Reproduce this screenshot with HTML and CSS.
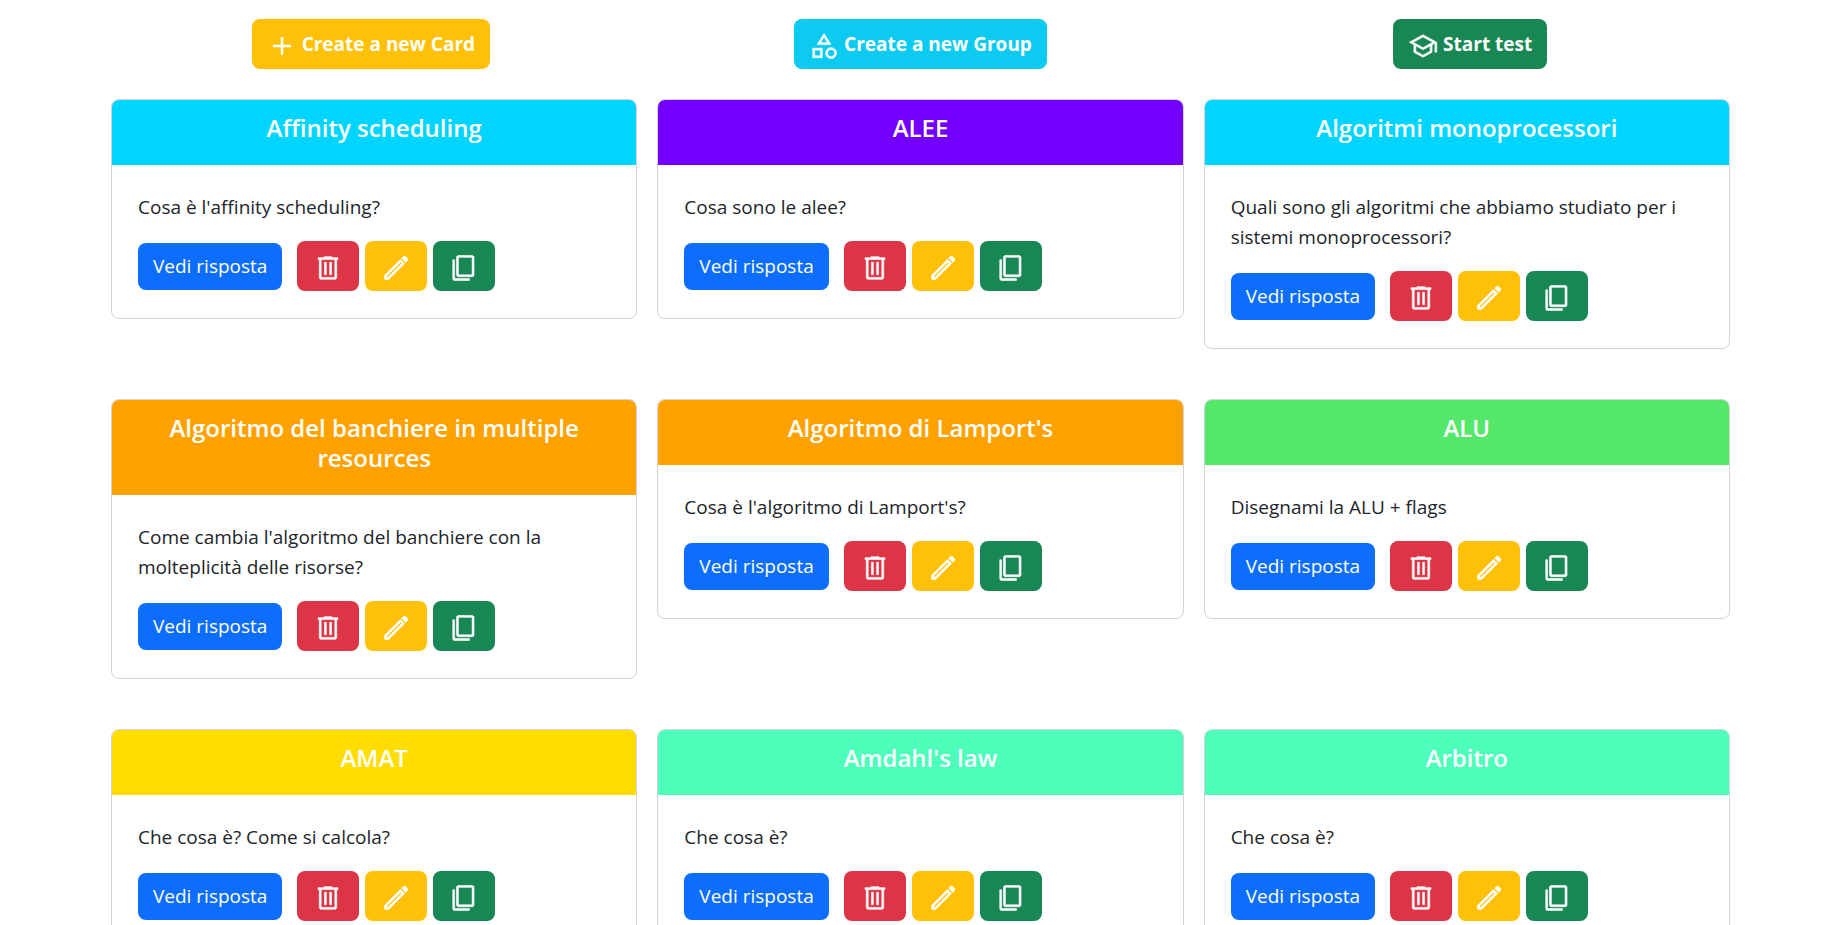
FILE: index.html
```html
<!DOCTYPE html>
<html lang="it">
<head>
<meta charset="utf-8">
<meta name="viewport" content="width=device-width, initial-scale=1">
<title>Flashcards</title>
<link rel="stylesheet" href="styles.css">
</head>
<body>
<svg class="sprite" aria-hidden="true">
  <symbol id="i-add" viewBox="0 -960 960 960"><path d="M450-200v-250H200v-60h250v-250h60v250h250v60H510v250h-60z"/></symbol>
  <symbol id="i-category" viewBox="0 -960 960 960"><path d="m261-526 220-354 220 354H261zM706-80q-74 0-124-50t-50-124q0-74 50-124t124-50q74 0 124 50t50 124q0 74-50 124T706-80zm-586-25v-304h304v304H120zm586.085-35Q754-140 787-173.085q33-33.084 33-81Q820-302 786.916-335q-33.085-33-81.001-33Q658-368 625-334.916q-33 33.085-33 81.001Q592-206 625.084-173q33.085 33 81.001 33zM180-165h184v-184H180v184zm189-421h224L481-767 369-586z"/></symbol>
  <symbol id="i-school" viewBox="0 -960 960 960"><path d="M479-120 189-279v-240L40-600l439-240 441 240v317h-60v-282l-91 46v240L479-120zm0-308 315-172-315-169-313 169 313 172zm0 240 230-127v-168L479-360 249-485v170l230 127z"/></symbol>
  <symbol id="i-delete" viewBox="0 -960 960 960"><path d="M261-120q-24.75 0-42.375-17.625T201-180v-570h-41v-60h188v-30h264v30h188v60h-41v570q0 24-18 42t-42 18H261zm438-630H261v570h438v-570zM367-266h60v-399h-60v399zm166 0h60v-399h-60v399z"/></symbol>
  <symbol id="i-edit" viewBox="0 -960 960 960"><path d="M180-180h44l443-443-44-44-443 443v44zm614-486L666-794l42-42q17-17 42-17t42 17l44 44q17 17 17 42t-17 42l-42 42zm-42 42L248-120H120v-128l504-504 128 128zm-107-21l-22-22 44 44-22-22z"/></symbol>
  <symbol id="i-copy" viewBox="0 -960 960 960"><path d="M180-81q-24 0-42-18t-18-42v-603h60v603h474v60H180zm120-120q-24 0-42-18t-18-42v-560q0-24 18-42t42-18h440q24 0 42 18t18 42v560q0 24-18 42t-42 18H300zm0-60h440v-560H300v560z"/></symbol>
</svg>

<header class="toolbar">
  <button type="button" class="btn btn-top yellow"><svg class="icon"><use href="#i-add"/></svg>Create a new Card</button>
  <button type="button" class="btn btn-top info"><svg class="icon"><use href="#i-category"/></svg>Create a new Group</button>
  <button type="button" class="btn btn-top green"><svg class="icon"><use href="#i-school"/></svg>Start test</button>
</header>

<main class="cards" id="cards"></main>

<template id="card-template">
  <article class="card">
    <h2 class="card-title"></h2>
    <div class="card-body">
      <p class="question"></p>
      <div class="actions">
        <button type="button" class="btn answer">Vedi risposta</button>
        <button type="button" class="btn tool red" aria-label="Elimina"><svg class="icon"><use href="#i-delete"/></svg></button>
        <button type="button" class="btn tool yellow" aria-label="Modifica"><svg class="icon heavy"><use href="#i-edit"/></svg></button>
        <button type="button" class="btn tool green" aria-label="Copia"><svg class="icon"><use href="#i-copy"/></svg></button>
      </div>
    </div>
  </article>
</template>
<script src="cards.js"></script>
</body>
</html>
```
FILE: styles.css
```css
* { box-sizing: border-box; }

body {
  margin: 0;
  background: #fff;
  color: #212529;
  font-family: "Segoe UI", "Open Sans", "Noto Sans", sans-serif;
  font-size: 19px;
  line-height: 30px;
}

.sprite { display: none; }

.icon {
  width: 30px;
  height: 30px;
  flex: none;
  fill: currentColor;
  stroke: currentColor;
  stroke-width: 20;
}

.heavy { stroke-width: 30; }

.btn {
  display: inline-flex;
  align-items: center;
  border: 0;
  border-radius: 8px;
  color: #fff;
  font: inherit;
  white-space: nowrap;
  cursor: pointer;
}

.yellow { background: #ffc107; }
.info { background: #0dcaf0; }
.green { background: #198754; }
.red { background: #dc3545; }

.toolbar {
  display: grid;
  grid-template-columns: repeat(3, 1fr);
  justify-items: center;
  padding: 19px 93px 30px 96px;
}

.btn-top {
  height: 50px;
  gap: 5px;
  padding: 0 15px;
  font-weight: 700;
}

.btn-top .icon { margin-top: 4px; }

.cards {
  display: grid;
  grid-template-columns: repeat(3, 1fr);
  align-items: start;
  gap: 50px 20px;
  padding: 0 108px 50px 111px;
}

.card {
  overflow: hidden;
  border: 1px solid #d3d3d4;
  border-radius: 8px;
}

.card-title {
  margin: 0;
  padding: 13px 20px 22px;
  color: #fff;
  font-size: 24px;
  font-weight: 600;
  line-height: 30px;
  text-align: center;
}

.card.cyan .card-title { background: #00d5ff; }
.card.violet .card-title { background: #7300ff; }
.card.orange .card-title { background: #ffa200; }
.card.lime .card-title { background: #54e86b; }
.card.gold .card-title { background: #ffdd00; }
.card.mint .card-title { background: #4dffbb; }

.card-body { padding: 27px 26px; }

.question { margin: 0 0 19px; }

.actions {
  display: flex;
  align-items: center;
  gap: 6px;
}

.answer {
  height: 47px;
  margin-right: 9px;
  padding: 0 15px;
  background: #0d6efd;
}

.tool {
  height: 50px;
  padding: 4px 16px 0;
}
```
FILE: cards.js
```js
const cards = [
  ["cyan", "Affinity scheduling", "Cosa è l'affinity scheduling?"],
  ["violet", "ALEE", "Cosa sono le alee?"],
  ["cyan", "Algoritmi monoprocessori", "Quali sono gli algoritmi che abbiamo studiato per i sistemi monoprocessori?"],
  ["orange", "Algoritmo del banchiere in multiple resources", "Come cambia l'algoritmo del banchiere con la molteplicità delle risorse?"],
  ["orange", "Algoritmo di Lamport's", "Cosa è l'algoritmo di Lamport's?"],
  ["lime", "ALU", "Disegnami la ALU + flags"],
  ["gold", "AMAT", "Che cosa è? Come si calcola?"],
  ["mint", "Amdahl's law", "Che cosa è?"],
  ["mint", "Arbitro", "Che cosa è?"]
];

const list = document.getElementById("cards");
const template = document.getElementById("card-template");

for (const [color, title, question] of cards) {
  const node = template.content.cloneNode(true);
  node.querySelector(".card").classList.add(color);
  node.querySelector(".card-title").textContent = title;
  node.querySelector(".question").textContent = question;
  list.append(node);
}
```
